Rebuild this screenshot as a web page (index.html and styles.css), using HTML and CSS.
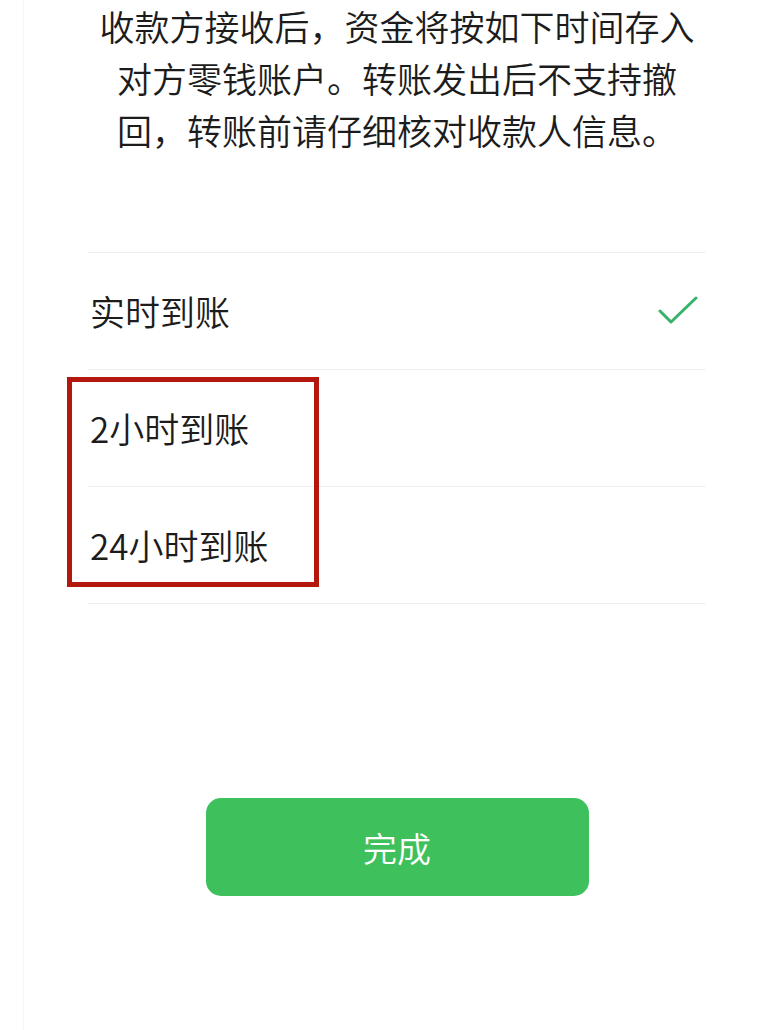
FILE: index.html
```html
<!DOCTYPE html>
<html lang="zh-CN">
<head>
<meta charset="utf-8">
<title>到账时间</title>
<link rel="stylesheet" href="styles.css">
</head>
<body>
<div class="screen">
  <div class="content">
    <p class="notice">收款方接收后，资金将按如下时间存入<br>对方零钱账户。转账发出后不支持撤<br>回，转账前请仔细核对收款人信息。</p>
    <div class="options">
      <div class="option">
        <span class="label">实时到账</span>
        <svg class="check" width="40" height="30" viewBox="0 0 40 30"><path d="M2 15 L13 26 L38 2" fill="none" stroke="#35b36a" stroke-width="3" stroke-linecap="round" stroke-linejoin="round"/></svg>
      </div>
      <div class="option"><span class="label">2小时到账</span></div>
      <div class="option"><span class="label">24小时到账</span></div>
      <div class="highlight"></div>
    </div>
    <div class="actions">
      <button class="done">完成</button>
    </div>
  </div>
</div>
</body>
</html>
```
FILE: styles.css
```css
html, body {
  margin: 0;
  padding: 0;
  background: #ffffff;
}
body {
  font-family: "Noto Sans CJK SC", "Noto Sans", sans-serif;
  color: #1c1c1c;
}
.screen {
  margin-left: 23px;
  border-left: 1px solid #f5f5f5;
  min-height: 1030px;
  box-sizing: border-box;
}
.content {
  padding: 0 56px 0 64px;
}
.notice {
  margin: 0;
  text-align: center;
  font-size: 35px;
  font-weight: 350;
  line-height: 52px;
  color: #1c1c1c;
}
.options {
  position: relative;
  margin-top: 96px;
  border-bottom: 1px solid #efefef;
}
.option {
  display: flex;
  align-items: center;
  justify-content: space-between;
  height: 116px;
  border-top: 1px solid #efefef;
  padding: 0 8px 0 2px;
}
.label {
  font-size: 35px;
  font-weight: 350;
  line-height: 40px;
  color: #1c1c1c;
}
.check {
  display: block;
}
.highlight {
  position: absolute;
  left: -21px;
  top: 125px;
  width: 252px;
  height: 210px;
  border: 5px solid #b4170e;
  box-sizing: border-box;
}
.actions {
  display: flex;
  justify-content: center;
  margin-top: 194px;
}
.done {
  width: 383px;
  height: 98px;
  border: none;
  border-radius: 15px;
  background: #3ec15c;
  color: #ffffff;
  font-family: "Noto Sans CJK SC", "Noto Sans", sans-serif;
  font-size: 34px;
  font-weight: 350;
  padding: 0;
}
```
